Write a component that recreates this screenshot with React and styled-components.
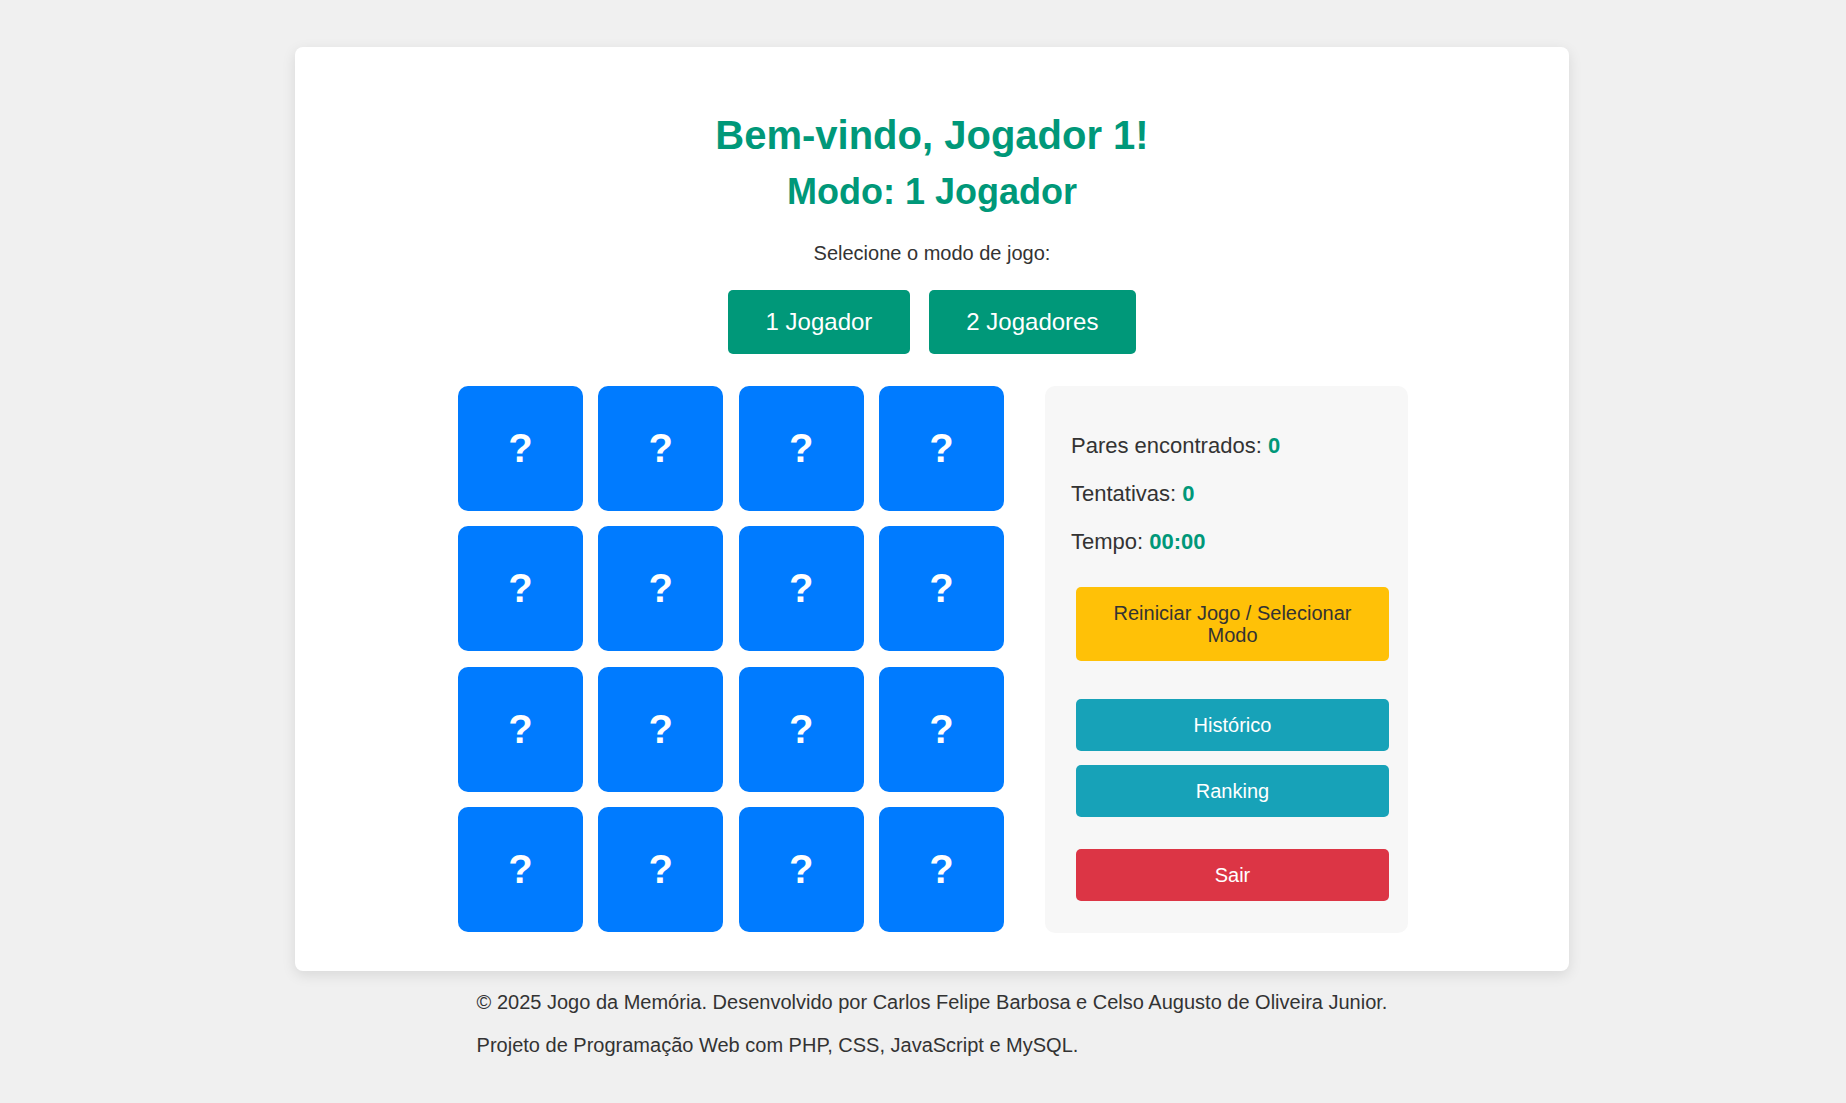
import styled, { createGlobalStyle } from "styled-components";

const GlobalStyle = createGlobalStyle`
  body {
    margin: 0;
    background: #f0f0f0;
    font-family: "Liberation Sans", Arial, sans-serif;
    color: #333;
  }
`;

const Page = styled.div`
  padding: 47px 0 30px 18px;
`;

const Container = styled.div`
  width: 1274px;
  margin: 0 auto;
  background: #fff;
  border-radius: 8px;
  box-shadow: 0 4px 14px rgba(0, 0, 0, 0.1);
  padding: 65px 0 38px;
  text-align: center;
  box-sizing: border-box;
`;

const Title = styled.h1`
  margin: 0;
  font-size: 40px;
  line-height: 46px;
  color: #009879;
`;

const Subtitle = styled.h2`
  margin: 13px 0 0;
  font-size: 36px;
  line-height: 41px;
  color: #009879;
`;

const Hint = styled.p`
  margin: 30px 0 0;
  font-size: 20px;
  line-height: 23px;
`;

const ModeRow = styled.div`
  display: flex;
  justify-content: center;
  gap: 19px;
  margin-top: 25px;
`;

const ModeButton = styled.button`
  background: #009879;
  color: #fff;
  border: none;
  border-radius: 5px;
  font-family: inherit;
  font-size: 24px;
  line-height: 28px;
  padding: 18px 37.5px;
  cursor: pointer;
`;

const GameArea = styled.div`
  display: flex;
  justify-content: center;
  align-items: flex-start;
  gap: 41px;
  margin-top: 32px;
  padding-left: 2px;
`;

const Board = styled.div`
  display: grid;
  grid-template-columns: repeat(4, 125px);
  grid-auto-rows: 125px;
  gap: 15.33px;
`;

const Card = styled.div`
  background: #007bff;
  border-radius: 10px;
  display: flex;
  align-items: center;
  justify-content: center;
  color: #fff;
  font-size: 40px;
  font-weight: bold;
  cursor: pointer;
`;

const Panel = styled.div`
  width: 363px;
  box-sizing: border-box;
  background: #f7f7f7;
  border-radius: 10px;
  padding: 47px 19px 32px 26px;
  display: flex;
  flex-direction: column;
  text-align: left;
`;

const Stats = styled.div`
  display: flex;
  flex-direction: column;
  gap: 22px;
`;

const Stat = styled.p`
  margin: 0;
  font-size: 22px;
  line-height: 26px;
`;

const Value = styled.span`
  color: #009879;
  font-weight: bold;
`;

const ActionButton = styled.button`
  width: 313px;
  margin: ${(p) => p.$top}px 0 0 5px;
  background: ${(p) => p.$bg};
  color: ${(p) => p.$color || "#fff"};
  border: none;
  border-radius: 5px;
  font-family: inherit;
  font-size: 20px;
  line-height: 22px;
  padding: 15px 20px;
  cursor: pointer;
`;

const Footer = styled.footer`
  width: fit-content;
  margin: 0 auto;
  font-size: 20px;
  line-height: 23px;

  p {
    margin: 20px 0;
  }
`;

export default function App() {
  const cards = Array.from({ length: 16 });
  return (
    <>
      <GlobalStyle />
      <Page>
        <Container>
          <Title>Bem-vindo, Jogador 1!</Title>
          <Subtitle>Modo: 1 Jogador</Subtitle>
          <Hint>Selecione o modo de jogo:</Hint>
          <ModeRow>
            <ModeButton>1 Jogador</ModeButton>
            <ModeButton>2 Jogadores</ModeButton>
          </ModeRow>
          <GameArea>
            <Board>
              {cards.map((_, i) => (
                <Card key={i}>?</Card>
              ))}
            </Board>
            <Panel>
              <Stats>
                <Stat>
                  Pares encontrados: <Value>0</Value>
                </Stat>
                <Stat>
                  Tentativas: <Value>0</Value>
                </Stat>
                <Stat>
                  Tempo: <Value>00:00</Value>
                </Stat>
              </Stats>
              <ActionButton $top={32} $bg="#ffc107" $color="#333">
                Reiniciar Jogo / Selecionar Modo
              </ActionButton>
              <ActionButton $top={38} $bg="#17a2b8">
                Histórico
              </ActionButton>
              <ActionButton $top={14} $bg="#17a2b8">
                Ranking
              </ActionButton>
              <ActionButton $top={32} $bg="#dc3545">
                Sair
              </ActionButton>
            </Panel>
          </GameArea>
        </Container>
        <Footer>
          <p>
            © 2025 Jogo da Memória. Desenvolvido por Carlos Felipe Barbosa e
            Celso Augusto de Oliveira Junior.
          </p>
          <p>Projeto de Programação Web com PHP, CSS, JavaScript e MySQL.</p>
        </Footer>
      </Page>
    </>
  );
}
